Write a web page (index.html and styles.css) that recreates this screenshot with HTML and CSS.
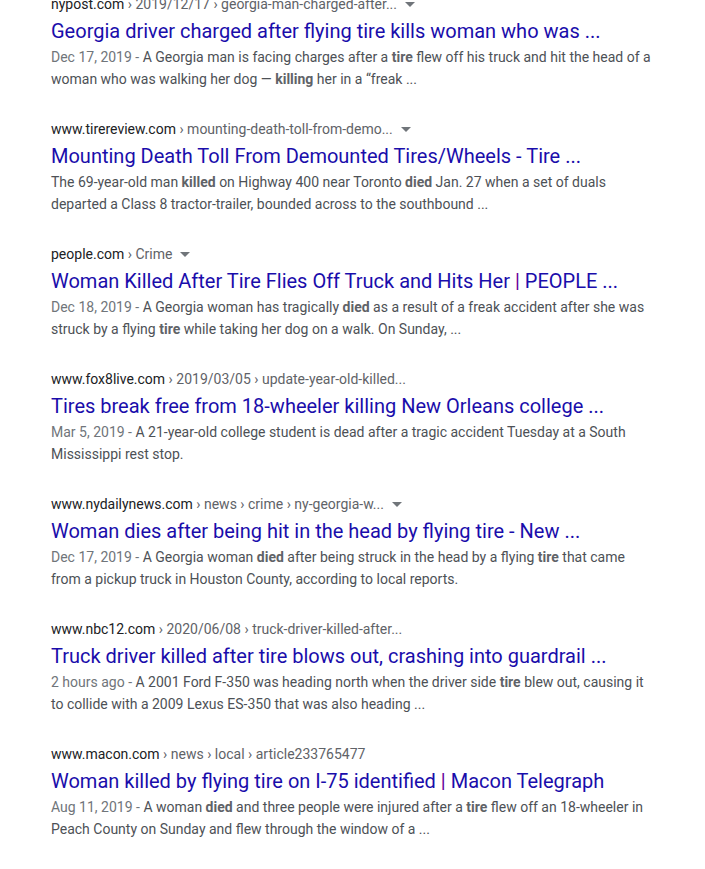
FILE: index.html
```html
<!DOCTYPE html>
<html>
<head>
<meta charset="utf-8">
<link rel="stylesheet" href="styles.css">
</head>
<body>
<div class="results">
  <div class="result">
    <div class="url"><span class="domain">nypost.com</span><span class="crumb"> › 2019/12/17 › georgia-man-charged-after...</span><span class="arrow"></span></div>
    <h3 class="title">Georgia driver charged after flying tire kills woman who was ...</h3>
    <div class="snippet"><span class="date">Dec 17, 2019 - </span>A Georgia man is facing charges after a <b>tire</b> flew off his truck and hit the head of a woman who was walking her dog — <b>killing</b> her in a “freak ...</div>
  </div>
  <div class="result">
    <div class="url"><span class="domain">www.tirereview.com</span><span class="crumb"> › mounting-death-toll-from-demo...</span><span class="arrow"></span></div>
    <h3 class="title">Mounting Death Toll From Demounted Tires/Wheels - Tire ...</h3>
    <div class="snippet">The 69-year-old man <b>killed</b> on Highway 400 near Toronto <b>died</b> Jan. 27 when a set of duals departed a Class 8 tractor-trailer, bounded across to the southbound ...</div>
  </div>
  <div class="result">
    <div class="url"><span class="domain">people.com</span><span class="crumb"> › Crime</span><span class="arrow"></span></div>
    <h3 class="title">Woman Killed After Tire Flies Off Truck and Hits Her <span class="pipe">|</span> PEOPLE ...</h3>
    <div class="snippet"><span class="date">Dec 18, 2019 - </span>A Georgia woman has tragically <b>died</b> as a result of a freak accident after she was struck by a flying <b>tire</b> while taking her dog on a walk. On Sunday, ...</div>
  </div>
  <div class="result">
    <div class="url"><span class="domain">www.fox8live.com</span><span class="crumb"> › 2019/03/05 › update-year-old-killed...</span></div>
    <h3 class="title">Tires break free from 18-wheeler killing New Orleans college ...</h3>
    <div class="snippet"><span class="date">Mar 5, 2019 - </span>A 21-year-old college student is dead after a tragic accident Tuesday at a South Mississippi rest stop.</div>
  </div>
  <div class="result">
    <div class="url"><span class="domain">www.nydailynews.com</span><span class="crumb"> › news › crime › ny-georgia-w...</span><span class="arrow"></span></div>
    <h3 class="title">Woman dies after being hit in the head by flying tire - New ...</h3>
    <div class="snippet"><span class="date">Dec 17, 2019 - </span>A Georgia woman <b>died</b> after being struck in the head by a flying <b>tire</b> that came from a pickup truck in Houston County, according to local reports.</div>
  </div>
  <div class="result">
    <div class="url"><span class="domain">www.nbc12.com</span><span class="crumb"> › 2020/06/08 › truck-driver-killed-after...</span></div>
    <h3 class="title">Truck driver killed after tire blows out, crashing into guardrail ...</h3>
    <div class="snippet"><span class="date">2 hours ago - </span>A 2001 Ford F-350 was heading north when the driver side <b>tire</b> blew out, causing it to collide with a 2009 Lexus ES-350 that was also heading ...</div>
  </div>
  <div class="result">
    <div class="url"><span class="domain">www.macon.com</span><span class="crumb"> › news › local › article233765477</span></div>
    <h3 class="title">Woman killed by flying tire on I-75 identified <span class="pipe">|</span> Macon Telegraph</h3>
    <div class="snippet"><span class="date">Aug 11, 2019 - </span>A woman <b>died</b> and three people were injured after a <b>tire</b> flew off an 18-wheeler in Peach County on Sunday and flew through the window of a ...</div>
  </div>
</div>
</body>
</html>
```
FILE: styles.css
```css
html, body {
  margin: 0;
  padding: 0;
  background: #fff;
}
body {
  font-family: Roboto, Arial, sans-serif;
  color: #4d5156;
}
.results {
  margin-top: -7px;
  padding-left: 51px;
  width: 605px;
  display: flex;
  flex-direction: column;
  gap: 28px;
}
.url {
  font-size: 14px;
  line-height: 22px;
  height: 22px;
  white-space: nowrap;
  display: flex;
  align-items: center;
}
.domain {
  color: #202124;
}
.crumb {
  color: #5f6368;
  white-space: pre;
}
.arrow {
  display: inline-block;
  width: 0;
  height: 0;
  margin-left: 8px;
  margin-top: 1px;
  border-left: 5px solid transparent;
  border-right: 5px solid transparent;
  border-top: 5px solid #70757a;
}
.title {
  margin: 3px 0 2px;
  font-size: 20px;
  line-height: 26px;
  font-weight: 400;
  color: #1a0dab;
  white-space: nowrap;
}
.pipe {
  color: #660099;
}
.snippet {
  font-size: 14px;
  line-height: 22px;
  color: #4d5156;
}
.date {
  color: #70757a;
}
.snippet b {
  font-weight: 700;
  color: #5f6368;
}
```
